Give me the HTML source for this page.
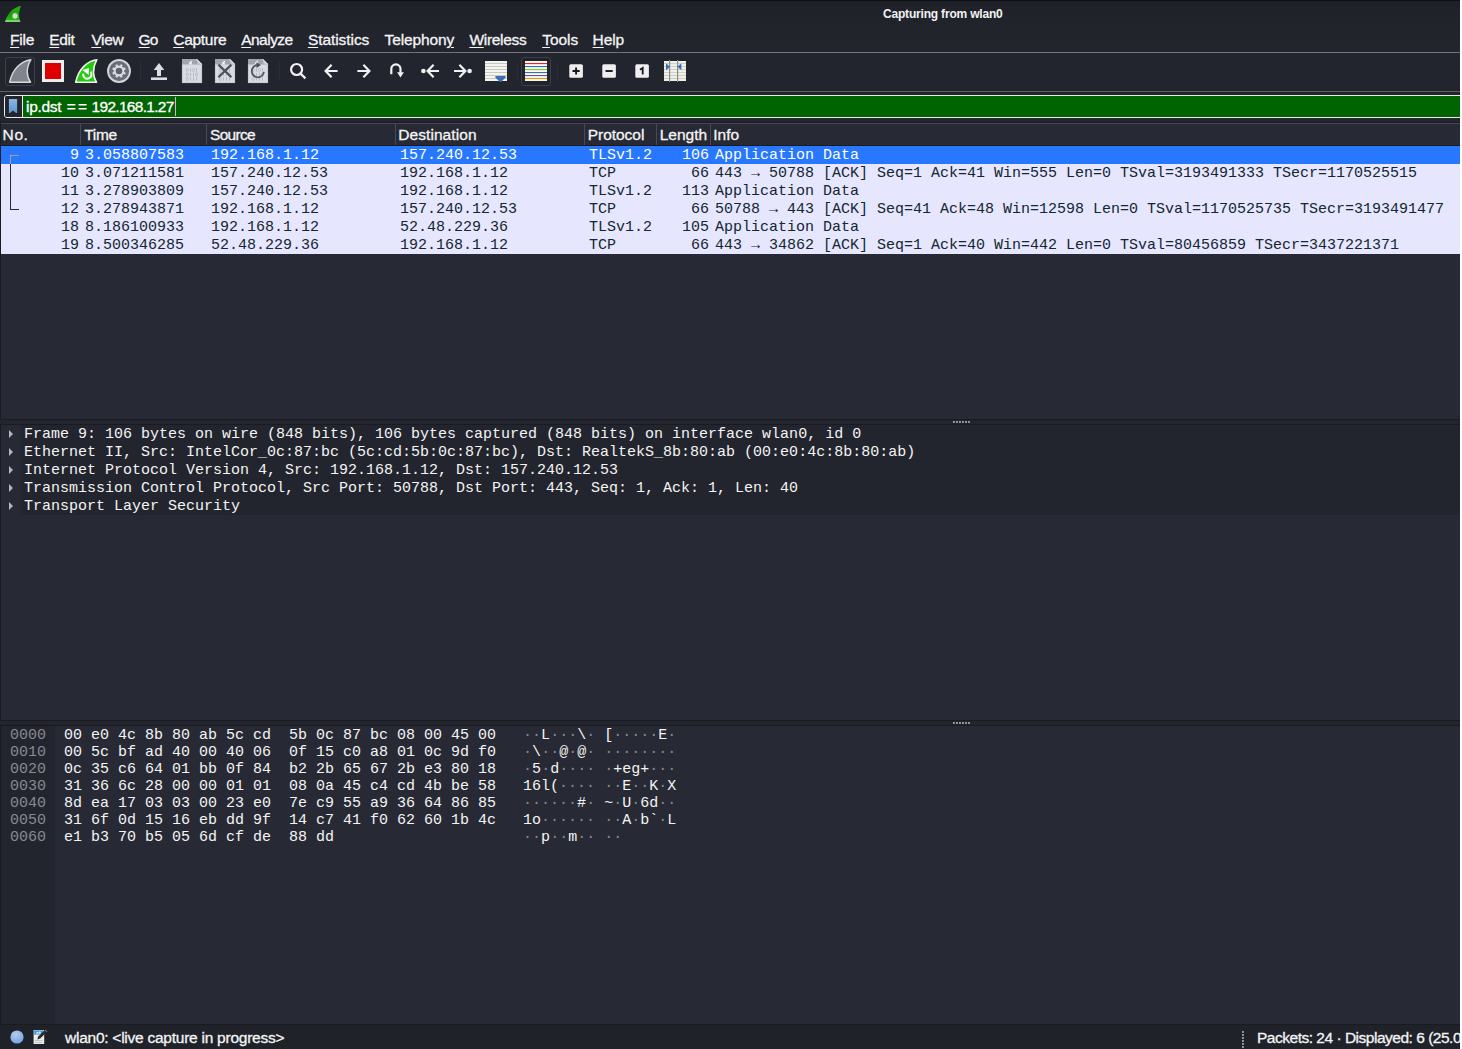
<!DOCTYPE html>
<html lang="en">
<head>
<meta charset="utf-8">
<title>Capturing from wlan0</title>
<style>
html,body{margin:0;padding:0;}
body{width:1462px;height:1049px;overflow:hidden;background:#fff;position:relative;
  font-family:"Liberation Sans","DejaVu Sans",sans-serif;color:#f4f4f4;}
#win{position:absolute;left:0;top:0;width:1460px;height:1049px;background:#23252e;overflow:hidden;}
.abs{position:absolute;}
/* title + menu */
#titlebar{position:absolute;left:0;top:0;width:1460px;height:52px;background:linear-gradient(to bottom,#1e2027 0,#1f2229 10px,#22242c 30px,#23252e 52px);}
#topedge{position:absolute;left:0;top:0;width:1460px;height:1px;background:#0d0e12;}
#title{position:absolute;left:883px;top:5px;font-size:12px;letter-spacing:-0.19px;font-weight:bold;line-height:18px;white-space:nowrap;color:#f2f2f2;}
#menu{-webkit-text-stroke:0.3px #f4f4f4;position:absolute;left:0;top:28px;height:24px;white-space:nowrap;font-size:15.5px;line-height:24px;color:#f4f4f4;}
#menu span{position:absolute;top:0;}
#menu u{text-decoration:underline;text-underline-offset:2px;text-decoration-thickness:1px;}
.hline{position:absolute;left:0;width:1460px;height:1px;background:#70737b;}
/* toolbar */
.tbtn{position:absolute;top:57px;width:28px;height:27px;border:1px solid #3d404a;border-radius:3px;background:#22242c;}
.vsep{position:absolute;top:62px;width:1px;height:19px;background:#2b2e37;}
/* filter */
#filter{position:absolute;left:4px;top:95px;width:1470px;height:21px;border:1px solid #f0ebe4;border-radius:3px;background:#23252e;overflow:hidden;}
#bm{position:absolute;left:0;top:0;width:17px;height:21px;background:#23252e;border-right:1px solid #eeeae4;}
#ftext{-webkit-text-stroke:0.3px #fff;position:absolute;left:21px;top:0;letter-spacing:-0.3px;font-size:15.5px;line-height:21px;white-space:nowrap;color:#fff;}
#cursor{position:absolute;left:170px;top:1px;width:1px;height:19px;background:#f0a0f0;}
/* panes */
.pane{position:absolute;left:0;width:1462px;background:#272a34;border:1px solid #191b21;box-sizing:border-box;overflow:hidden;}
.mono{font-family:"Liberation Mono","DejaVu Sans Mono",monospace;font-size:15px;white-space:pre;}
/* packet list */
#hdr{-webkit-text-stroke:0.3px #f4f4f4;position:absolute;left:0;top:0;width:1460px;height:21px;background:#272a34;border-top:1px solid #464953;border-bottom:1px solid #191b21;font-size:15.5px;line-height:21px;color:#f4f4f4;}
#hdr span{position:absolute;top:0;white-space:nowrap;}
#hdr i{position:absolute;top:0;width:1px;height:21px;background:#484b55;}
.row{position:absolute;left:0;width:1460px;height:18px;line-height:18px;background:#e7e6ff;color:#12272e;}
.row.sel{background:#2777ff;color:#fff;}
.row span{position:absolute;top:1px;}
/* details */
.drow{position:absolute;left:20px;width:1440px;height:18px;line-height:18px;background:#23252e;color:#f4f4f4;}
.drow span{position:absolute;left:3px;top:1px;}
.arrow{position:absolute;left:8px;width:0;height:0;border-left:4.5px solid #b4b6bc;border-top:4px solid transparent;border-bottom:4px solid transparent;}
/* hex */
.hrow{position:absolute;left:9px;height:17px;line-height:17px;color:#f4f4f4;}
.hrow b{font-weight:normal;color:#888a91;}
.hrow i{font-style:normal;color:#85878e;}
/* status */
#status{-webkit-text-stroke:0.3px #f4f4f4;position:absolute;left:0;top:1025px;width:1460px;height:24px;background:#1f2229;font-size:15.5px;line-height:24px;color:#f4f4f4;}
.grip i{position:absolute;width:2px;height:2px;background:linear-gradient(135deg,#a4a6ac,#7b7d84);top:0;}
</style>
</head>
<body>
<div id="win">
  <div id="titlebar"></div>
  <div id="topedge"></div>
  <svg class="abs" style="left:4px;top:5px" width="18" height="18" viewBox="4 5 18 18">
    <defs><linearGradient id="fg" x1="0" y1="0" x2="0" y2="1"><stop offset="0" stop-color="#2bb312"/><stop offset="0.55" stop-color="#1f9a0b"/><stop offset="0.86" stop-color="#2bb41a"/><stop offset="0.9" stop-color="#74cf64"/><stop offset="1" stop-color="#8ad67c"/></linearGradient></defs>
    <path d="M21.1 5.9 C14 7 7.6 12.4 4.9 22 L20.5 22 C18.6 17 18.4 11.4 21.1 5.9 Z" fill="url(#fg)"/>
    <g transform="translate(15.05 15.9)" fill="#dff0dc" opacity=".88"><circle r="2.3"/><rect x="-0.55" y="-3.1" width="1.1" height="1.4" transform="rotate(0)"/><rect x="-0.55" y="-3.1" width="1.1" height="1.4" transform="rotate(45)"/><rect x="-0.55" y="-3.1" width="1.1" height="1.4" transform="rotate(90)"/><rect x="-0.55" y="-3.1" width="1.1" height="1.4" transform="rotate(135)"/><rect x="-0.55" y="-3.1" width="1.1" height="1.4" transform="rotate(180)"/><rect x="-0.55" y="-3.1" width="1.1" height="1.4" transform="rotate(225)"/><rect x="-0.55" y="-3.1" width="1.1" height="1.4" transform="rotate(270)"/><rect x="-0.55" y="-3.1" width="1.1" height="1.4" transform="rotate(315)"/></g>
  </svg>
  <div id="title">Capturing from wlan0</div>
  <div id="menu">
    <span style="left:10.0px;letter-spacing:-0.2px"><u>F</u>ile</span>
    <span style="left:49.3px;letter-spacing:-0.4px"><u>E</u>dit</span>
    <span style="left:91.4px;letter-spacing:-0.37px"><u>V</u>iew</span>
    <span style="left:138.6px;letter-spacing:-1.0px"><u>G</u>o</span>
    <span style="left:173.2px;letter-spacing:-0.27px"><u>C</u>apture</span>
    <span style="left:241.2px;letter-spacing:-0.52px"><u>A</u>nalyze</span>
    <span style="left:307.9px;letter-spacing:-0.06px"><u>S</u>tatistics</span>
    <span style="left:384.6px;letter-spacing:-0.14px">Telephon<u>y</u></span>
    <span style="left:469.4px;letter-spacing:-0.3px"><u>W</u>ireless</span>
    <span style="left:542.2px;letter-spacing:-0.02px"><u>T</u>ools</span>
    <span style="left:592.6px;letter-spacing:-0.1px"><u>H</u>elp</span>
  </div>
  <div class="hline" style="top:52px"></div>

  <!-- toolbar -->
  <div class="tbtn" style="left:5px"></div>
<div class="tbtn" style="left:521px"></div>
<div class="vsep" style="left:140px"></div>
<div class="vsep" style="left:279px"></div>
<div class="vsep" style="left:517px"></div>
<div class="vsep" style="left:557px"></div>
<svg class="abs" style="left:0;top:53px" width="700" height="38" viewBox="0 53 700 38">
  <defs>
    <linearGradient id="docg" x1="0" y1="0" x2="1" y2="1"><stop offset="0" stop-color="#d9dbe2"/><stop offset="1" stop-color="#c6c8d0"/></linearGradient>
    <g id="doc">
      <path d="M0 0 H14.8 L20 5.2 V24 H0 Z" fill="#d9dbe3"/>
      <path d="M0.4 5.6 V23.6 H19.6 V5.6" fill="none" stroke="#c2c4cd" stroke-width=".8"/>
      <path d="M0 0 H14.8 L20 5.2 V5.6 H0 Z" fill="#a1a3ad"/>
      <path d="M14.8 0 L20 5.2 H15.6 Z" fill="#c4c6cf"/>
      <path d="M14.6 .3 L19.7 5.4" stroke="#eef0f5" stroke-width=".9"/>
      <path d="M6.6 5.6 C7 3.2 8.2 2 10.4 1.6 C9.6 3 9.6 4.4 10 5.6 Z" fill="#eceef4"/>
      <rect x="4.2" y="9.4" width="2" height="3" rx=".9" fill="none" stroke="#aeb0ba" stroke-width=".7"/><rect x="8.0" y="9.2" width=".8" height="3.4" fill="#aeb0ba"/><rect x="10.4" y="9.4" width="2" height="3" rx=".9" fill="none" stroke="#aeb0ba" stroke-width=".7"/><rect x="14.2" y="9.2" width=".8" height="3.4" fill="#aeb0ba"/><rect x="4.2" y="13.9" width="2" height="3" rx=".9" fill="none" stroke="#aeb0ba" stroke-width=".7"/><rect x="8.0" y="13.8" width=".8" height="3.4" fill="#aeb0ba"/><rect x="11.1" y="13.8" width=".8" height="3.4" fill="#aeb0ba"/><rect x="13.5" y="13.9" width="2" height="3" rx=".9" fill="none" stroke="#aeb0ba" stroke-width=".7"/><rect x="4.2" y="18.5" width="2" height="3" rx=".9" fill="none" stroke="#aeb0ba" stroke-width=".7"/><rect x="8.0" y="18.3" width=".8" height="3.4" fill="#aeb0ba"/><rect x="11.1" y="18.3" width=".8" height="3.4" fill="#aeb0ba"/><rect x="14.2" y="18.3" width=".8" height="3.4" fill="#aeb0ba"/>
    </g>
  </defs>
  <!-- 1 grey fin -->
  <path d="M30.9 59.7 C21.5 61 12.6 68.6 9.6 82.2 L30.6 82.2 C26.6 77 25.6 68.6 30.9 59.7 Z" fill="#81848d" stroke="#d6d8de" stroke-width="1.4" stroke-linejoin="round"/>
  <!-- 2 stop -->
  <rect x="42" y="60" width="22" height="22" fill="#efefef"/>
  <rect x="45" y="63" width="16" height="16" fill="#dc0000"/>
  <!-- 3 green fin -->
  <path d="M96.8 59.7 C87.4 61 78.6 68.6 75.7 82.2 L96.5 82.2 C92.9 77 92 68.6 96.8 59.7 Z" fill="#22cc0a" stroke="#f2f2f2" stroke-width="1.6" stroke-linejoin="round"/>
  <path d="M90.6 71.8 A4.2 4.2 0 1 1 83.2 73.6" fill="none" stroke="#f6f6f6" stroke-width="2.2"/>
  <path d="M82.2 70 L88.9 67.9 L88.8 75 Z" fill="#f6f6f6"/>
  <!-- 4 gear -->
  <circle cx="119" cy="71" r="11" fill="#6a6d77" stroke="#d3d5dc" stroke-width="1.9"/>
  <g transform="translate(119 71)" fill="#dcdde3"><circle r="5.4"/><rect x="-1.15" y="-6.9" width="2.3" height="3" rx=".5" transform="rotate(22.5)"/><rect x="-1.15" y="-6.9" width="2.3" height="3" rx=".5" transform="rotate(67.5)"/><rect x="-1.15" y="-6.9" width="2.3" height="3" rx=".5" transform="rotate(112.5)"/><rect x="-1.15" y="-6.9" width="2.3" height="3" rx=".5" transform="rotate(157.5)"/><rect x="-1.15" y="-6.9" width="2.3" height="3" rx=".5" transform="rotate(202.5)"/><rect x="-1.15" y="-6.9" width="2.3" height="3" rx=".5" transform="rotate(247.5)"/><rect x="-1.15" y="-6.9" width="2.3" height="3" rx=".5" transform="rotate(292.5)"/><rect x="-1.15" y="-6.9" width="2.3" height="3" rx=".5" transform="rotate(337.5)"/></g>
  <circle cx="119" cy="71" r="3.3" fill="#5f626c"/>
  <!-- 5 upload -->
  <path d="M159 63 L164.3 70 H161 V76 H157 V70 H153.7 Z" fill="#dddee4"/>
  <rect x="151" y="77.4" width="16" height="2.6" fill="#dddee4"/>
  <!-- 6-8 docs -->
  <use href="#doc" x="182" y="59"/>
  <use href="#doc" x="215" y="59"/>
  <use href="#doc" x="248" y="59"/>
  <path d="M218.4 64.6 L231.4 77.2 M231.4 64.6 L218.4 77.2" stroke="#4d505a" stroke-width="2.2" fill="none"/>
  <path d="M263.9 71.9 A6.1 6.1 0 1 1 257.4 65.1" fill="none" stroke="#4d505a" stroke-width="1.7"/>
  <path d="M256.4 62.3 L260.9 65.1 L256.6 68 Z" fill="#4d505a"/>
  <!-- 9 magnifier -->
  <g stroke="#f1f1f1" stroke-width="2.2" fill="none" stroke-linecap="butt">
    <circle cx="296.6" cy="69.5" r="5.5"/>
    <path d="M300.6 73.6 L305.4 78.4"/>
    <!-- 10 left arrow -->
    <path d="M337.6 71 H326.5 M331.6 64.8 L325.6 71 L331.6 77.2"/>
    <!-- 11 right arrow -->
    <path d="M357.4 71 H368.5 M363.4 64.8 L369.4 71 L363.4 77.2"/>
    <!-- 12 u-turn -->
    <path d="M391.3 74.3 V69 A4.6 4.6 0 0 1 400.5 69 V73"/>
    <!-- 13 -->
    <path d="M439 71 H428.6 M433.6 64.8 L427.6 71 L433.6 77.2"/>
    <!-- 14 -->
    <path d="M454 71 H464.4 M459.4 64.8 L465.4 71 L459.4 77.2"/>
  </g>
  <path d="M397.1 72.3 H403.9 L400.5 77.5 Z" fill="#f1f1f1"/>
  <circle cx="423.4" cy="71" r="2.3" fill="#f1f1f1"/>
  <circle cx="469.6" cy="71" r="2.3" fill="#f1f1f1"/>
  <!-- 15 autoscroll -->
  <rect x="485" y="61" width="22" height="20" fill="#f4f4f2"/>
  <g fill="#c9c9c0">
    <rect x="485" y="63" width="22" height="1"/><rect x="485" y="66" width="22" height="1"/><rect x="485" y="69" width="22" height="1"/><rect x="485" y="72" width="22" height="1"/><rect x="485" y="75" width="22" height="1"/><rect x="485" y="78" width="22" height="1"/>
  </g>
  <path d="M496.2 77 H504.8 L500.5 81 Z" fill="#3a6db4" stroke="#3a6db4" stroke-width="2" stroke-linejoin="round"/>
  <!-- 16 colorize -->
  <rect x="525" y="61" width="22" height="20" fill="#f6f6f6"/>
  <rect x="525" y="63" width="22" height="1.1" fill="#ee2222"/>
  <rect x="525" y="66" width="22" height="1.1" fill="#3a6db4"/>
  <rect x="525" y="69" width="22" height="1.1" fill="#77d112"/>
  <rect x="525" y="72" width="22" height="1.1" fill="#3a6db4"/>
  <rect x="525" y="75" width="22" height="1.1" fill="#7a4a86"/>
  <rect x="525" y="78" width="22" height="1.1" fill="#c8a000"/>
  <!-- 17-19 zoom -->
  <rect x="569.3" y="64.2" width="13.6" height="13.6" rx="1.6" fill="#efefef"/>
  <path d="M576.1 67.4 V74.6 M572.5 71 H579.7" stroke="#15171c" stroke-width="1.9"/>
  <rect x="602.3" y="64.2" width="13.6" height="13.6" rx="1.6" fill="#efefef"/>
  <path d="M605.5 71 H612.7" stroke="#15171c" stroke-width="1.9"/>
  <rect x="635.3" y="64.2" width="13.6" height="13.6" rx="1.6" fill="#efefef"/>
  <path d="M640 69.8 L642.7 68 V74.4" stroke="#15171c" stroke-width="1.8" fill="none"/>
  <!-- 20 resize columns -->
  <rect x="664" y="61" width="22" height="20" fill="#f0f0ea"/>
  <g fill="#cfcfc6">
    <rect x="664" y="63" width="22" height="1"/><rect x="664" y="66" width="22" height="1"/><rect x="664" y="69" width="22" height="1"/><rect x="664" y="72" width="22" height="1"/><rect x="664" y="75" width="22" height="1"/><rect x="664" y="78" width="22" height="1"/>
  </g>
  <rect x="669" y="60" width="1.2" height="22" fill="#8c8c86"/>
  <rect x="677" y="60" width="1.2" height="22" fill="#8c8c86"/>
  <path d="M666 63.2 L670 66.7 L666 70.2 Z" fill="#3a6db4"/>
  <path d="M681.4 63.2 L677.4 66.7 L681.4 70.2 Z" fill="#3a6db4"/>
</svg>

  <div class="hline" style="top:91px;background:#5e616a"></div>

  <!-- filter -->
  <div id="filter">
    <div class="abs" style="left:18px;top:0;width:1460px;height:21px;background:#006400"></div><div id="bm"><svg class="abs" style="left:0;top:0" width="17" height="21" viewBox="5 96 17 21"><defs><linearGradient id="bmg" x1="0" y1="0" x2="0" y2="1"><stop offset="0" stop-color="#8db5e4"/><stop offset="1" stop-color="#5f94d2"/></linearGradient></defs><path d="M8.9 99 H17.1 V113 H16 L13 110.6 L10 113 H8.9 Z" fill="url(#bmg)"/></svg></div>
    <div id="ftext">ip.dst <span style="margin-left:1.6px;letter-spacing:2px;margin-right:-1.4px">==</span> <span style="letter-spacing:-0.71px">192.168.1.27</span></div>
    <div id="cursor"></div>
  </div>

  <!-- packet list -->
  <div class="pane" id="plist" style="top:122px;height:298px;">
    <div id="hdr">
      <span style="left:1.6px;letter-spacing:0.6px">No.</span>
      <i style="left:79px"></i>
      <span style="left:83.3px;letter-spacing:-0.33px">Time</span>
      <i style="left:205px"></i>
      <span style="left:209.0px;letter-spacing:-0.7px">Source</span>
      <i style="left:394px"></i>
      <span style="left:397.2px;letter-spacing:0.08px">Destination</span>
      <i style="left:583px"></i>
      <span style="left:586.7px;letter-spacing:-0.03px">Protocol</span>
      <i style="left:655px"></i>
      <span style="left:658.7px;letter-spacing:0px">Length</span>
      <i style="left:709px"></i>
      <span style="left:712.3px;letter-spacing:0px">Info</span>
    </div>
    <div id="rows" class="mono">
<div class="row sel" style="top:23px"><span style="right:1382px">9</span><span style="left:84px">3.058807583</span><span style="left:210px">192.168.1.12</span><span style="left:399px">157.240.12.53</span><span style="left:588px">TLSv1.2</span><span style="right:752px">106</span><span style="left:714px">Application Data</span></div>
<div class="row" style="top:41px"><span style="right:1382px">10</span><span style="left:84px">3.071211581</span><span style="left:210px">157.240.12.53</span><span style="left:399px">192.168.1.12</span><span style="left:588px">TCP</span><span style="right:752px">66</span><span style="left:714px">443 → 50788 [ACK] Seq=1 Ack=41 Win=555 Len=0 TSval=3193491333 TSecr=1170525515</span></div>
<div class="row" style="top:59px"><span style="right:1382px">11</span><span style="left:84px">3.278903809</span><span style="left:210px">157.240.12.53</span><span style="left:399px">192.168.1.12</span><span style="left:588px">TLSv1.2</span><span style="right:752px">113</span><span style="left:714px">Application Data</span></div>
<div class="row" style="top:77px"><span style="right:1382px">12</span><span style="left:84px">3.278943871</span><span style="left:210px">192.168.1.12</span><span style="left:399px">157.240.12.53</span><span style="left:588px">TCP</span><span style="right:752px">66</span><span style="left:714px">50788 → 443 [ACK] Seq=41 Ack=48 Win=12598 Len=0 TSval=1170525735 TSecr=3193491477</span></div>
<div class="row" style="top:95px"><span style="right:1382px">18</span><span style="left:84px">8.186100933</span><span style="left:210px">192.168.1.12</span><span style="left:399px">52.48.229.36</span><span style="left:588px">TLSv1.2</span><span style="right:752px">105</span><span style="left:714px">Application Data</span></div>
<div class="row" style="top:113px"><span style="right:1382px">19</span><span style="left:84px">8.500346285</span><span style="left:210px">52.48.229.36</span><span style="left:399px">192.168.1.12</span><span style="left:588px">TCP</span><span style="right:752px">66</span><span style="left:714px">443 → 34862 [ACK] Seq=1 Ack=40 Win=442 Len=0 TSval=80456859 TSecr=3437221371</span></div>
</div>
<div class="abs" style="left:9px;top:32px;width:9px;height:1px;background:#a0a09c"></div>
<div class="abs" style="left:9px;top:32px;width:1px;height:9px;background:#a0a09c"></div>
<div class="abs" style="left:9px;top:41px;width:1px;height:46px;background:#1e2c34"></div>
<div class="abs" style="left:9px;top:86px;width:9px;height:1px;background:#1e2c34"></div>

  </div>

  <div class="grip abs" style="left:953px;top:421px"><i style="left:0px"></i><i style="left:3px"></i><i style="left:6px"></i><i style="left:9px"></i><i style="left:12px"></i><i style="left:15px"></i></div>
  <div class="grip abs" style="left:953px;top:722px"><i style="left:0px"></i><i style="left:3px"></i><i style="left:6px"></i><i style="left:9px"></i><i style="left:12px"></i><i style="left:15px"></i></div>
  <!-- details -->
  <div class="pane" id="details" style="top:424px;height:297px;">
    <div id="drows" class="mono">
<div class="arrow" style="top:5px"></div><div class="drow" style="top:0px"><span>Frame 9: 106 bytes on wire (848 bits), 106 bytes captured (848 bits) on interface wlan0, id 0</span></div>
<div class="arrow" style="top:23px"></div><div class="drow" style="top:18px"><span>Ethernet II, Src: IntelCor_0c:87:bc (5c:cd:5b:0c:87:bc), Dst: RealtekS_8b:80:ab (00:e0:4c:8b:80:ab)</span></div>
<div class="arrow" style="top:41px"></div><div class="drow" style="top:36px"><span>Internet Protocol Version 4, Src: 192.168.1.12, Dst: 157.240.12.53</span></div>
<div class="arrow" style="top:59px"></div><div class="drow" style="top:54px"><span>Transmission Control Protocol, Src Port: 50788, Dst Port: 443, Seq: 1, Ack: 1, Len: 40</span></div>
<div class="arrow" style="top:77px"></div><div class="drow" style="top:72px"><span>Transport Layer Security</span></div>
</div>
  </div>

  <!-- hex -->
  <div class="pane" id="hex" style="top:725px;height:300px;">
    <div class="abs" style="left:0;top:0;width:54px;height:300px;background:#23252e"></div>
    <div id="hrows" class="mono">
<div class="hrow" style="top:1px"><b>0000</b>  00 e0 4c 8b 80 ab 5c cd  5b 0c 87 bc 08 00 45 00   <i>··</i>L<i>···</i>\<i>·</i> [<i>·····</i>E<i>·</i></div>
<div class="hrow" style="top:18px"><b>0010</b>  00 5c bf ad 40 00 40 06  0f 15 c0 a8 01 0c 9d f0   <i>·</i>\<i>··</i>@<i>·</i>@<i>·</i> <i>········</i></div>
<div class="hrow" style="top:35px"><b>0020</b>  0c 35 c6 64 01 bb 0f 84  b2 2b 65 67 2b e3 80 18   <i>·</i>5<i>·</i>d<i>····</i> <i>·</i>+eg+<i>···</i></div>
<div class="hrow" style="top:52px"><b>0030</b>  31 36 6c 28 00 00 01 01  08 0a 45 c4 cd 4b be 58   16l(<i>····</i> <i>··</i>E<i>··</i>K<i>·</i>X</div>
<div class="hrow" style="top:69px"><b>0040</b>  8d ea 17 03 03 00 23 e0  7e c9 55 a9 36 64 86 85   <i>······</i>#<i>·</i> ~<i>·</i>U<i>·</i>6d<i>··</i></div>
<div class="hrow" style="top:86px"><b>0050</b>  31 6f 0d 15 16 eb dd 9f  14 c7 41 f0 62 60 1b 4c   1o<i>······</i> <i>··</i>A<i>·</i>b`<i>·</i>L</div>
<div class="hrow" style="top:103px"><b>0060</b>  e1 b3 70 b5 05 6d cf de  88 dd                     <i>··</i>p<i>··</i>m<i>··</i> <i>··</i></div>
</div>
  </div>

  <!-- status -->
  <div id="status">
<svg class="abs" style="left:0;top:0" width="60" height="24" viewBox="0 1025 60 24">
  <defs>
    <radialGradient id="bl" cx="0.4" cy="0.3" r="0.8"><stop offset="0" stop-color="#b4cdf0"/><stop offset="1" stop-color="#6f9fe0"/></radialGradient>
  </defs>
  <circle cx="17" cy="1037" r="6.6" fill="url(#bl)"/>
  <rect x="33.6" y="1030" width="10.6" height="14" fill="#ecece8"/>
  <rect x="34.2" y="1030.4" width="9.4" height="4.2" fill="#3f95e0"/>
  <path d="M35.6 1033.6 L37.5 1031.6 L38.6 1033 L40 1031 L41 1033.6 Z" fill="#f4f8ff"/>
  <rect x="35" y="1040.2" width="7.6" height=".8" fill="#b8b8b4"/>
  <rect x="35" y="1042" width="7.6" height=".8" fill="#b8b8b4"/>
  <path d="M37.3 1039.4 L38.2 1036.6 L44.6 1030.2 L46.6 1032.2 L40.2 1038.6 Z" fill="#2b2b2b"/>
  <path d="M44.6 1030.2 L45.4 1029.4 L47.4 1031.4 L46.6 1032.2 Z" fill="#77797f"/>
</svg>
<div class="grip abs" style="left:1242px;top:6px"><i style="left:0;top:0px"></i><i style="left:0;top:3px"></i><i style="left:0;top:6px"></i><i style="left:0;top:9px"></i><i style="left:0;top:12px"></i><i style="left:0;top:15px"></i></div>

    <span class="abs" style="left:65px;top:1px;white-space:nowrap;letter-spacing:-0.25px">wlan0: &lt;live capture in progress&gt;</span>
    <span class="abs" style="left:1257px;top:1px;white-space:nowrap;letter-spacing:-0.49px">Packets: 24 · Displayed: 6 (25.0%)</span>
  </div>
</div>
</body>
</html>
